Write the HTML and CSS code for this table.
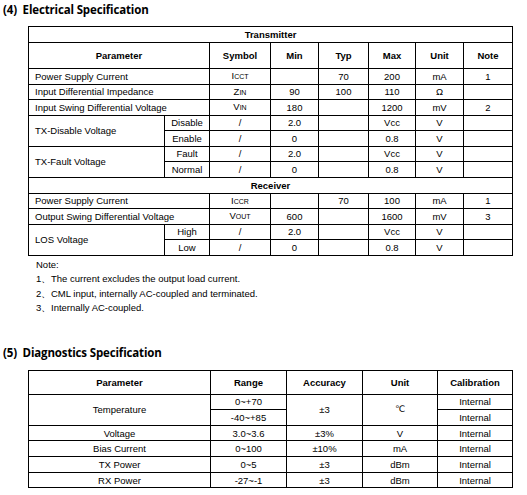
FILE: index.html
```html
<!DOCTYPE html>
<html lang="en">
<head>
  <meta charset="UTF-8">
  <meta name="viewport" content="width=device-width, initial-scale=1.0">
  <title>Specification</title>
  <link rel="stylesheet" href="styles.css">
</head>
<body>

<h2 class="title">(4)&nbsp; Electrical Specification</h2>

<table class="spec elec">
  <colgroup>
    <col class="c-name"><col class="c-sub"><col class="c-sym"><col class="c-min">
    <col class="c-typ"><col class="c-max"><col class="c-unit"><col class="c-note">
  </colgroup>
  <tr class="group"><td colspan="8">Transmitter</td></tr>
  <tr class="head">
    <th colspan="2">Parameter</th><th>Symbol</th><th>Min</th><th>Typ</th><th>Max</th><th>Unit</th><th>Note</th>
  </tr>
  <tr>
    <td colspan="2" class="name">Power Supply Current</td>
    <td>I<span class="sc">CCT</span></td><td></td><td>70</td><td>200</td><td>mA</td><td>1</td>
  </tr>
  <tr>
    <td colspan="2" class="name">Input Differential Impedance</td>
    <td>Z<span class="sc">IN</span></td><td>90</td><td>100</td><td>110</td><td>Ω</td><td></td>
  </tr>
  <tr>
    <td colspan="2" class="name">Input Swing Differential Voltage</td>
    <td>V<span class="sc">IN</span></td><td>180</td><td></td><td>1200</td><td>mV</td><td>2</td>
  </tr>
  <tr>
    <td rowspan="2" class="name">TX-Disable Voltage</td>
    <td>Disable</td><td>/</td><td>2.0</td><td></td><td>Vcc</td><td>V</td><td></td>
  </tr>
  <tr>
    <td>Enable</td><td>/</td><td>0</td><td></td><td>0.8</td><td>V</td><td></td>
  </tr>
  <tr>
    <td rowspan="2" class="name">TX-Fault Voltage</td>
    <td>Fault</td><td>/</td><td>2.0</td><td></td><td>Vcc</td><td>V</td><td></td>
  </tr>
  <tr>
    <td>Normal</td><td>/</td><td>0</td><td></td><td>0.8</td><td>V</td><td></td>
  </tr>
  <tr class="group"><td colspan="8">Receiver</td></tr>
  <tr>
    <td colspan="2" class="name">Power Supply Current</td>
    <td>I<span class="sc">CCR</span></td><td></td><td>70</td><td>100</td><td>mA</td><td>1</td>
  </tr>
  <tr>
    <td colspan="2" class="name">Output Swing Differential Voltage</td>
    <td>V<span class="sc">OUT</span></td><td>600</td><td></td><td>1600</td><td>mV</td><td>3</td>
  </tr>
  <tr>
    <td rowspan="2" class="name">LOS Voltage</td>
    <td>High</td><td>/</td><td>2.0</td><td></td><td>Vcc</td><td>V</td><td></td>
  </tr>
  <tr>
    <td>Low</td><td>/</td><td>0</td><td></td><td>0.8</td><td>V</td><td></td>
  </tr>
</table>

<div class="notes">
  <p>Note:</p>
  <p><span class="num">1、</span>The current excludes the output load current.</p>
  <p><span class="num">2、</span>CML input, internally AC-coupled and terminated.</p>
  <p><span class="num">3、</span>Internally AC-coupled.</p>
</div>

<h2 class="title second">(5)&nbsp; Diagnostics Specification</h2>

<table class="spec diag">
  <colgroup>
    <col class="d-name"><col class="d-range"><col class="d-acc"><col class="d-unit"><col class="d-cal">
  </colgroup>
  <tr class="head">
    <th>Parameter</th><th>Range</th><th>Accuracy</th><th>Unit</th><th>Calibration</th>
  </tr>
  <tr>
    <td rowspan="2">Temperature</td><td>0~+70</td><td rowspan="2">±3</td><td rowspan="2" class="deg">℃</td><td>Internal</td>
  </tr>
  <tr>
    <td>-40~+85</td><td>Internal</td>
  </tr>
  <tr><td>Voltage</td><td>3.0~3.6</td><td>±3%</td><td>V</td><td>Internal</td></tr>
  <tr><td>Bias Current</td><td>0~100</td><td>±10%</td><td>mA</td><td>Internal</td></tr>
  <tr><td>TX Power</td><td>0~5</td><td>±3</td><td>dBm</td><td>Internal</td></tr>
  <tr><td>RX Power</td><td>-27~-1</td><td>±3</td><td>dBm</td><td>Internal</td></tr>
</table>

</body>
</html>
```

FILE: styles.css
```css
/* page */
body {
  margin: 0;
  padding: 0 3px;
  background: #fff;
  color: #000;
  font-family: "Liberation Sans", Arial, sans-serif;
  font-size: 9.5px;
}

.title {
  margin: 0 0 6px 0;
  font-family: "Open Sans", "Noto Sans", sans-serif;
  font-weight: bold;
  font-size: 11.5px;
  line-height: 20px;
  letter-spacing: -0.15px;
}
.title.second {
  margin-top: 27px;
  margin-bottom: 7px;
}

/* tables */
.spec {
  border-collapse: collapse;
  table-layout: fixed;
  margin-left: 25px;
}
.spec td,
.spec th {
  border: 1px solid #000;
  padding: 0;
  text-align: center;
  vertical-align: middle;
  line-height: 11px;
  white-space: nowrap;
}
.spec th {
  font-weight: bold;
}
.spec tr {
  height: 15.5px;
}
.spec .name {
  text-align: left;
  padding-left: 6px;
}
.spec .group td {
  font-weight: bold;
}
.spec .sc {
  font-size: 7px;
}

.elec { width: 484px; }
.elec .head { height: 26px; }
.elec .group { height: 16px; }
.c-name { width: 136px; }
.c-sub { width: 45px; }
.c-sym { width: 61px; }
.c-min { width: 48px; }
.c-typ { width: 50px; }
.c-max { width: 47px; }
.c-unit { width: 48px; }
.c-note { width: 49px; }

.diag { width: 484px; }
.diag tr { height: 15.67px; }
.diag .head { height: 24px; }
.d-name { width: 182px; }
.d-range { width: 76px; }
.d-acc { width: 76px; }
.d-unit { width: 75px; }
.d-cal { width: 75px; }
.diag .deg {
  font-family: "DejaVu Sans", sans-serif;
  font-size: 9px;
}

/* notes */
.notes {
  margin: 2px 0 0 33px;
  line-height: 14.5px;
}
.notes p {
  margin: 0;
}
.notes .num {
  display: inline-block;
  width: 15px;
}
```
